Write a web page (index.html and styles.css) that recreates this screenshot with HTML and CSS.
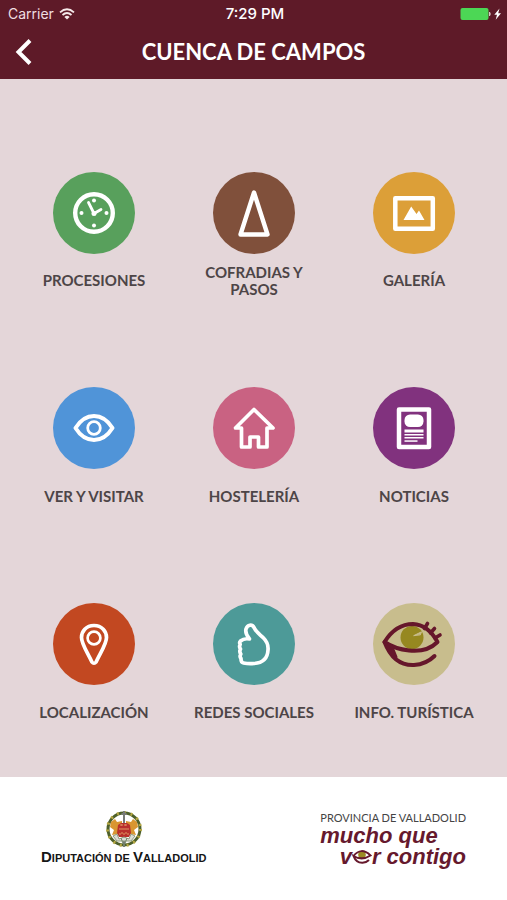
FILE: index.html
```html
<!DOCTYPE html>
<html lang="es">
<head>
<meta charset="utf-8">
<meta name="viewport" content="width=device-width, initial-scale=1">
<title>Cuenca de Campos</title>
<link rel="stylesheet" href="styles.css">
</head>
<body>
<header class="top">
  <div class="status">
    <span class="carrier">Carrier
      <svg width="16" height="12" viewBox="0 0 16 12" fill="none" stroke="#f5e9ea" stroke-width="1.8"><path d="M1 4.4Q8-1.8 15 4.4M3.5 7Q8 3 12.500 7"/><path d="M8 11.500 5.400 8.900Q8 6.800 10.600 8.900Z" fill="#f5e9ea" stroke="none"/></svg>
    </span>
    <span class="time">7:29 PM</span>
    <span class="power">
      <svg width="42" height="14" viewBox="0 0 42 14"><rect x=".5" y="1" width="28" height="12" rx="2" fill="#4cd755"/><path d="M29.500 5Q31 7 29.500 9Z" fill="#d9c5c8" stroke="#d9c5c8"/><path d="M39.500 1.500 34.300 7.800H37L35.700 12.700 41 6.300H38.200Z" fill="#fff"/></svg>
    </span>
  </div>
  <div class="nav">
    <button class="back" type="button" aria-label="Atrás">
      <svg width="18" height="28" viewBox="0 0 18 28" fill="none" stroke="#fff" stroke-width="4"><path d="M15 3.500 3.500 15 15 26.500"/></svg>
    </button>
    <h1>CUENCA DE CAMPOS</h1>
  </div>
</header>

<main class="menu">
  <a class="item" href="#procesiones">
    <svg class="disc green" viewBox="0 0 82 82"><circle cx="41" cy="41" r="18.800" stroke-width="4.400"/><g class="solid"><circle cx="41" cy="28.500" r="2"/><circle cx="53.500" cy="41" r="2"/><circle cx="41" cy="53.500" r="2"/><circle cx="28.500" cy="41" r="2"/><circle cx="41" cy="41.500" r="2.500"/></g><path d="M35.500 30.500 41 41.500 48 37.500" stroke-width="2.800"/></svg>
    <span class="label">PROCESIONES</span>
  </a>
  <a class="item" href="#cofradias">
    <svg class="disc brown" viewBox="0 0 82 82"><path d="M41 20.500 54.500 62.500H27.500Z" stroke-width="4.400"/></svg>
    <span class="label">COFRADIAS Y PASOS</span>
  </a>
  <a class="item" href="#galeria">
    <svg class="disc amber" viewBox="0 0 82 82"><rect x="22.300" y="26.300" width="37.500" height="30.500" stroke-width="4.500"/><path class="solid" d="M30.500 48 38.200 34.500 43.500 42 46 38.500 51.500 48Z"/></svg>
    <span class="label">GALERÍA</span>
  </a>
  <a class="item" href="#visitar">
    <svg class="disc blue" viewBox="0 0 82 82"><path d="M22.500 41Q30 29 41 29T59.500 41Q52 53 41 53T22.500 41Z" stroke-width="4"/><circle cx="41" cy="41" r="6.300" stroke-width="2.800"/></svg>
    <span class="label">VER Y VISITAR</span>
  </a>
  <a class="item" href="#hosteleria">
    <svg class="disc pink" viewBox="0 0 82 82"><path d="M41 22.500 60 41H54V60H45.500V50H37V60H28.500V41H22.500Z" stroke-width="3.700"/></svg>
    <span class="label">HOSTELERÍA</span>
  </a>
  <a class="item" href="#noticias">
    <svg class="disc purple" viewBox="0 0 82 82"><rect x="26" y="22.500" width="30" height="37.500" stroke-width="4.500"/><g class="solid"><rect x="31.500" y="27.500" width="19" height="12.500" rx="5.500"/><rect x="31.500" y="42.500" width="19" height="3"/><rect x="31.500" y="47" width="19" height="1.500"/><rect x="31.500" y="50" width="19" height="1.500"/><rect x="31.500" y="53.300" width="13" height="1.500"/></g></svg>
    <span class="label">NOTICIAS</span>
  </a>
  <a class="item" href="#localizacion">
    <svg class="disc orange" viewBox="0 0 82 82"><path d="M41 22.500C33 22.500 28.500 28.500 28.500 34.500C28.500 41 34.500 49.500 38.800 58.800Q41 61.500 43.200 58.800C47.500 49.500 53.500 41 53.500 34.500C53.500 28.500 49 22.500 41 22.500Z" stroke-width="3.700"/><circle cx="41" cy="35" r="6.400" stroke-width="2.700"/></svg>
    <span class="label">LOCALIZACIÓN</span>
  </a>
  <a class="item" href="#redes">
    <svg class="disc teal" viewBox="0 0 82 82"><path d="M27.500 38Q31 35 36.500 36C33.500 32.500 32 30 33 26C34.500 21.500 39 21 41 24.500C43 29 47 31.500 50.500 35C54 38.500 55.500 42 55 47C54.500 57 48 60 41 60.500C36 61 33 60.500 30.500 60Q27.800 59.500 28 55.500Q26.300 53.500 27.800 51Q26 48.500 27.500 46Q25.800 43.500 27.200 41.500Q26 39.500 27.500 38Z" stroke-width="3.700"/></svg>
    <span class="label">REDES SOCIALES</span>
  </a>
  <a class="item" href="#turismo">
    <svg class="disc sand" viewBox="0 0 82 82"><circle cx="39" cy="34.500" r="11.500" fill="#968820" stroke="none"/><path d="M41 32.500 48.500 28.800 47.500 31.500Z" fill="#c8bd8d" stroke="#c8bd8d" stroke-width="1"/><g class="wine"><path d="M11.500 39C19 27 29 21 40 21C51 21.500 59 29 64.500 39C56 47.500 45 48.500 36 47.500C27 46.500 19 44 11.500 39" stroke-width="4"/><path d="M11.500 39C18 56 29 62.500 41 62C50 61.500 56.500 58 61.500 53" stroke-width="4"/><path d="M12 39C15 46 18 50 23 54L19 44Z" stroke-width="3" fill="#66172b"/><path d="M51.500 25.500 54.500 20.500M57.500 30 61.500 25.500M62 35 67 32" stroke-width="3.600"/></g></svg>
    <span class="label">INFO. TURÍSTICA</span>
  </a>
</main>

<footer class="sponsors">
  <div class="diputacion">
    <svg width="38" height="38" viewBox="0 0 38 38" fill="none"><circle cx="19" cy="19" r="16" stroke="#4e602a" stroke-width="3"/><circle cx="19" cy="19" r="16.500" stroke="#b5a743" stroke-width="3" stroke-dasharray="2 5"/><path d="M19 1V37M16.500 4H21.500" stroke="#777b77" stroke-width="2"/><path d="M6 12 10 9 12 12 17 11V18L13 24 7 25 9 20 5 17ZM32 12 28 9 26 12 21 11V18L25 24 31 25 29 20 33 17Z" fill="#d99631"/><path d="M13 15 16 13H22L25 15 26 23 24 27H14L12 23Z" fill="#b9302c"/><path d="M15 15H23M14 19H24M14 24H24M17 14V26M21 14V26" stroke="#df9a62" stroke-dasharray="2 2"/><path d="M8 26 12 24 14 29 19 27 24 29 26 24 30 26 26 31H12Z" fill="#dcded7" stroke="#919b7b"/><path d="M16 28 19 36 22 28" stroke="#6e8267"/></svg>
    <p class="institution"><b>D</b>IPUTACIÓN DE <b>V</b>ALLADOLID</p>
  </div>
  <div class="provincia">
    <p class="region">PROVINCIA DE VALLADOLID</p>
    <p class="slogan">mucho que</p>
    <p class="slogan second">v<svg role="img" aria-label="e" width="20" height="15" viewBox="0 0 20 15" fill="none"><circle cx="10" cy="5.800" r="3.800" fill="#9b8b23"/><path d="M1.500 7Q9-2.500 18.500 6.500Q10 12 1.500 7Q4 14 10.500 13.800 14.500 13.500 17 11" stroke="#66192d" stroke-width="2"/></svg>r contigo</p>
  </div>
</footer>
</body>
</html>
```
FILE: styles.css
```css
* {
  box-sizing: border-box;
}

body {
  margin: 0;
  min-height: 100vh;
  display: flex;
  flex-direction: column;
  background: #e4d6d9;
  font-family: Lato, "Open Sans", sans-serif;
}

h1,
p {
  margin: 0;
}

.top {
  background: #5e1a28;
  color: #fff;
  padding-bottom: 8px;
}

.status {
  display: grid;
  grid-template-columns: 1fr auto 1fr;
  align-items: center;
  height: 27px;
  padding: 0 5px 0 8px;
  font: 15px Inter, "Liberation Sans", sans-serif;
}

.carrier {
  display: flex;
  align-items: center;
  gap: 5px;
  color: #f0dfe1;
  font-size: 14px;
}

.time {
  font-weight: 500;
}

.power {
  display: flex;
  justify-content: flex-end;
}

.nav {
  display: grid;
  grid-template-columns: 48px 1fr 48px;
  align-items: center;
  height: 44px;
  padding-bottom: 1px;
}

.back {
  display: flex;
  padding: 5px 0 0 15px;
  border: 0;
  background: none;
}

h1 {
  padding-top: 7px;
  font-size: 22px;
  font-weight: 700;
  line-height: 28px;
  text-align: center;
}

.menu {
  flex: 1;
  display: grid;
  grid-template-columns: repeat(3, 1fr);
  grid-auto-rows: 1fr;
  padding: 48px 13px 3px 14px;
}

.item {
  display: flex;
  flex-direction: column;
  align-items: center;
  justify-content: center;
  gap: 10px;
  color: #4d4547;
  text-decoration: none;
}

.disc {
  width: 82px;
  height: 82px;
  border-radius: 50%;
  fill: none;
  stroke: #fff;
  stroke-linecap: round;
  stroke-linejoin: round;
}

.disc .solid {
  fill: #fff;
  stroke: none;
}

.disc .wine {
  stroke: #66172b;
}

.green { background: #58a05c; }
.brown { background: #80503b; }
.amber { background: #dc9f38; }
.blue { background: #5094d8; }
.pink { background: #c96282; }
.purple { background: #81327e; }
.orange { background: #c24821; }
.teal { background: #4d9a98; }
.sand { background: #c8bd8d; }

.label {
  display: flex;
  align-items: center;
  max-width: 124px;
  height: 34px;
  font-size: 15px;
  font-weight: 700;
  line-height: 17px;
  text-align: center;
}

.sponsors {
  display: flex;
  align-items: center;
  justify-content: space-between;
  height: 123px;
  padding: 0 41px;
  background: #fff;
}

.diputacion {
  display: flex;
  flex-direction: column;
  align-items: center;
}

.institution {
  color: #161616;
  font: bold 11px/18px "Liberation Sans", Arial, sans-serif;
}

.institution b {
  font-size: 15px;
}

.region {
  color: #444;
  font-size: 11px;
  line-height: 14px;
}

.slogan {
  color: #66192d;
  font: italic bold 22px/21px "Liberation Sans", Arial, sans-serif;
}

.second {
  text-align: right;
}
```
